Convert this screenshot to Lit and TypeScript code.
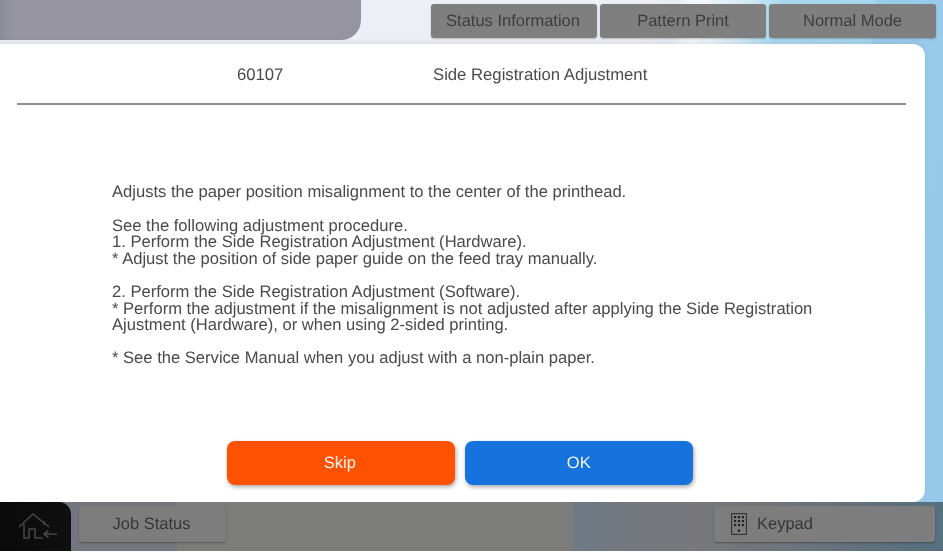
import { LitElement, html, css } from "lit";
import { customElement } from "lit/decorators.js";

@customElement("app-root")
export class AppRoot extends LitElement {
  static styles = css`
    :host {
      display: block;
      width: 943px;
      height: 553px;
      overflow: hidden;
      font-family: "Liberation Sans", Arial, sans-serif;
      color: #4a4a4a;
      background: #fff;
    }
    .page {
      position: relative;
      width: 943px;
      height: 551px;
      display: flex;
      flex-direction: column;
      overflow: hidden;
      text-rendering: geometricPrecision;
      filter: blur(0.3px);
      background: linear-gradient(
        97deg,
        #eeeff6 0,
        #eeeff6 640px,
        #e6edf6 672px,
        #f6fafd 690px,
        #d4ebf6 740px,
        #a9d9f0 775px,
        #a5d7ef 868px,
        #9acdec 872px,
        #96c9e9 100%
      );
    }
    .top {
      position: relative;
      height: 44px;
      flex: none;
      display: flex;
      align-items: flex-start;
    }
    .top-tab {
      width: 361px;
      height: 40px;
      flex: none;
      border-radius: 0 0 20px 0;
      background: linear-gradient(90deg, #8b8b97 0, #9694a1 14px, #9694a1 100%);
    }
    .tabs {
      margin-left: 70px;
      padding-top: 4px;
      display: flex;
      gap: 3px;
    }
    .tab {
      height: 34px;
      border-radius: 3px;
      background: #7f7f7f;
      box-shadow: 0 1px 2px rgba(0, 0, 0, 0.22);
      display: flex;
      align-items: center;
      justify-content: center;
      font-size: 16.5px;
      color: #3d3d3d;
      box-sizing: border-box;
    }
    .t1 { width: 166px; padding-right: 2px; }
    .t2 { width: 166px; }
    .t3 { width: 167px; }
    .modal {
      position: relative;
      width: 925px;
      height: 458px;
      flex: none;
      background: #fff;
      border-radius: 0 12px 12px 0;
      box-shadow: 0 -2px 4px rgba(60, 60, 80, 0.1);
      display: flex;
      flex-direction: column;
    }
    .head {
      margin: 0 19px 0 17px;
      height: 59px;
      flex: none;
      border-bottom: 2px solid #919191;
      display: flex;
      align-items: center;
      font-size: 16.7px;
      box-sizing: content-box;
    }
    .code { margin-left: 220px; width: 196px; padding-top: 3px; }
    .title { padding-top: 3px; }
    .body {
      margin: 79.4px 0 0 112px;
      width: 730px;
      font-size: 16.58px;
      line-height: 16.6px;
      color: #4a4a4a;
    }
    .body p { margin: 0 0 16.6px; }
    .actions {
      margin-top: auto;
      margin-bottom: 17px;
      margin-left: 226.7px;
      display: flex;
      gap: 9.5px;
    }
    .btn {
      width: 228.4px;
      height: 44px;
      border-radius: 8px;
      display: flex;
      align-items: center;
      justify-content: center;
      color: #f4f4f4;
      font-size: 16.5px;
      box-shadow: 1px 2px 4px rgba(0, 0, 0, 0.35);
      box-sizing: border-box;
    }
    .skip { background: #ff5200; padding-right: 2px; }
    .ok { background: #1673de; }
    .foot {
      position: relative;
      flex: 1;
      display: flex;
      align-items: flex-start;
      background: linear-gradient(
        90deg,
        #75757f 0,
        #75757f 176px,
        #7c7d7b 177px,
        #7c7d7b 572px,
        #6d7b86 574px,
        #747880 620px,
        #78787c 700px,
        #66727c 830px,
        #55707f 100%
      );
    }
    .home {
      width: 71px;
      height: 49px;
      flex: none;
      box-sizing: border-box;
      padding: 11px 0 0 18px;
      background: linear-gradient(90deg, #0a0a0a, #101010);
      border-radius: 0 12px 0 0;
    }
    .home svg { display: block; }
    .fbtn {
      margin-top: 4px;
      height: 36px;
      background: #7d7d7d;
      border-radius: 3px;
      box-shadow: 0 1px 2px rgba(0, 0, 0, 0.3);
      display: flex;
      align-items: center;
      font-size: 16.5px;
      color: #363636;
      box-sizing: border-box;
    }
    .job {
      width: 147px;
      margin-left: 8px;
      padding-right: 2px;
      justify-content: center;
    }
    .key {
      width: 221px;
      margin-left: auto;
      margin-right: 8px;
      padding-left: 17px;
      gap: 10px;
    }
  `;

  render() {
    return html`
      <div class="page">
        <div class="top">
          <div class="top-tab"></div>
          <div class="tabs">
            <div class="tab t1">Status Information</div>
            <div class="tab t2">Pattern Print</div>
            <div class="tab t3">Normal Mode</div>
          </div>
        </div>
        <div class="modal">
          <div class="head">
            <div class="code">60107</div>
            <div class="title">Side Registration Adjustment</div>
          </div>
          <div class="body">
            <p>Adjusts the paper position misalignment to the center of the printhead.</p>
            <p>See the following adjustment procedure.<br />1. Perform the Side Registration Adjustment (Hardware).<br />* Adjust the position of side paper guide on the feed tray manually.</p>
            <p>2. Perform the Side Registration Adjustment (Software).<br />* Perform the adjustment if the misalignment is not adjusted after applying the Side Registration Ajustment (Hardware), or when using 2-sided printing.</p>
            <p>* See the Service Manual when you adjust with a non-plain paper.</p>
          </div>
          <div class="actions">
            <div class="btn skip">Skip</div>
            <div class="btn ok">OK</div>
          </div>
        </div>
        <div class="foot">
          <div class="home">
            <svg width="40" height="27" viewBox="0 0 40 27" fill="none" stroke="#454545" stroke-width="1.6">
              <path d="M1 14 L15 1 L31 14" />
              <path d="M6 11 V25 H11 V16 H17 V25 H25" />
              <path d="M26 8 V12" />
              <path d="M39 21 H26 M30.5 17.5 L26 21 L30.5 24.5" />
            </svg>
          </div>
          <div class="fbtn job">Job Status</div>
          <div class="fbtn key">
            <svg width="16" height="22" viewBox="0 0 16 22">
              <rect x="0.6" y="0.6" width="14.8" height="20.8" fill="none" stroke="#333" stroke-width="1.1" />
              <g fill="#222">
                <rect x="3" y="3" width="2.2" height="2.2" /><rect x="6.9" y="3" width="2.2" height="2.2" /><rect x="10.8" y="3" width="2.2" height="2.2" />
                <rect x="3" y="7" width="2.2" height="2.2" /><rect x="6.9" y="7" width="2.2" height="2.2" /><rect x="10.8" y="7" width="2.2" height="2.2" />
                <rect x="3" y="11" width="2.2" height="2.2" /><rect x="6.9" y="11" width="2.2" height="2.2" /><rect x="10.8" y="11" width="2.2" height="2.2" />
                <rect x="6.9" y="16.5" width="2.2" height="2.2" />
              </g>
            </svg>
            <span>Keypad</span>
          </div>
        </div>
      </div>
    `;
  }
}
